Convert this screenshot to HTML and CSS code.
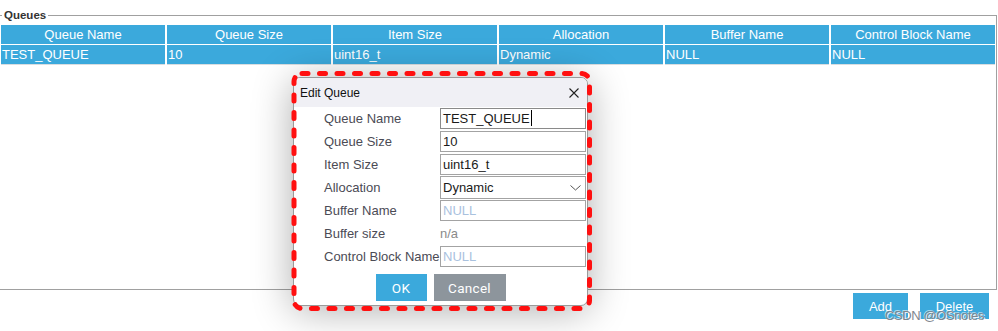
FILE: index.html
```html
<!DOCTYPE html>
<html>
<head>
<meta charset="utf-8">
<title>Queues</title>
<link rel="stylesheet" href="styles.css">
</head>
<body>
<div class="page">
  <fieldset class="queues">
    <legend class="legend">Queues</legend>
    <div class="panel">
      <div class="grid">
        <div class="th">Queue Name</div>
        <div class="th">Queue Size</div>
        <div class="th">Item Size</div>
        <div class="th">Allocation</div>
        <div class="th">Buffer Name</div>
        <div class="th">Control Block Name</div>
        <div class="td">TEST_QUEUE</div>
        <div class="td">10</div>
        <div class="td">uint16_t</div>
        <div class="td">Dynamic</div>
        <div class="td">NULL</div>
        <div class="td">NULL</div>
      </div>
    </div>
  </fieldset>
  <div class="actions">
    <button class="btn btn-add">Add</button>
    <button class="btn btn-del">Delete</button>
  </div>
</div>

<div class="dialog">
  <div class="titlebar">
    <span class="title">Edit Queue</span>
    <svg class="close" width="10" height="10" viewBox="0 0 10 10"><path d="M0.5 0.5 L9.5 9.5 M9.5 0.5 L0.5 9.5" stroke="#222" stroke-width="1.1" fill="none"/></svg>
  </div>
  <div class="form">
    <div class="label">Queue Name</div>
    <div class="field focused">TEST_QUEUE<span class="caret"></span></div>
    <div class="label">Queue Size</div>
    <div class="field">10</div>
    <div class="label">Item Size</div>
    <div class="field">uint16_t</div>
    <div class="label">Allocation</div>
    <div class="field select"><span>Dynamic</span><svg width="11" height="6" viewBox="0 0 11 6"><path d="M0.5 0.5 L5.5 5 L10.5 0.5" stroke="#555" stroke-width="1" fill="none"/></svg></div>
    <div class="label">Buffer Name</div>
    <div class="field placeholder">NULL</div>
    <div class="label">Buffer size</div>
    <div class="static">n/a</div>
    <div class="label">Control Block Name</div>
    <div class="field placeholder">NULL</div>
  </div>
  <div class="dlg-buttons">
    <button class="dbtn dbtn-ok">OK</button>
    <button class="dbtn dbtn-cancel">Cancel</button>
  </div>
</div>

<svg class="annot" width="998" height="331" viewBox="0 0 998 331">
  <rect x="294" y="73.5" width="295.5" height="235" rx="8" ry="8" fill="none" stroke="#ff1010" stroke-width="5" stroke-dasharray="6 11.5" stroke-linecap="round"/>
</svg>

<div class="watermark">CSDN @OSnotes</div>
</body>
</html>
```

FILE: styles.css
```css
html, body {
  margin: 0;
  padding: 0;
}
body {
  width: 998px;
  height: 331px;
  overflow: hidden;
  position: relative;
  background: #fff;
  font-family: "Liberation Sans", Arial, sans-serif;
}
.page {
  padding-top: 9px;
}
.queues {
  margin: 0 1px 0 0;
  padding: 4px 0 0 1px;
  border: 1px solid #a0a0a0;
  border-left: none;
  min-width: 0;
}
.legend {
  font-size: 11.5px;
  font-weight: bold;
  color: #333;
  padding: 0 2px;
  margin-left: 1px;
  line-height: 12px;
}
.panel {
  height: 264px;
}
.grid {
  display: grid;
  grid-template-columns: repeat(6, 1fr);
  column-gap: 2px;
  row-gap: 1px;
  width: 994px;
}
.th {
  background: #3ba9dc;
  color: #fff;
  height: 19px;
  line-height: 19px;
  text-align: center;
  font-size: 13px;
}
.td {
  background: #3ba9dc;
  color: #fff;
  height: 19px;
  line-height: 19px;
  font-size: 13px;
  padding-left: 1px;
  border-bottom: 1px solid #d9dde0;
}
.actions {
  display: flex;
  justify-content: flex-end;
  gap: 12px;
  padding: 3px 9px 0 0;
}
.btn {
  border: none;
  background: #3ba9dc;
  color: #fff;
  font-family: "Liberation Sans", Arial, sans-serif;
  font-size: 13px;
  height: 26px;
  padding: 0;
}
.btn-add { width: 55px; }
.btn-del { width: 69px; }

.dialog {
  position: absolute;
  left: 293px;
  top: 77px;
  width: 295px;
  height: 229px;
  box-sizing: border-box;
  border: 1px solid #9a9a9a;
  border-radius: 7px;
  background: #fff;
  box-shadow: 0 4px 40px rgba(0, 0, 0, 0.33);
  overflow: hidden;
}
.titlebar {
  height: 29px;
  background: #f0f0f5;
  display: flex;
  align-items: center;
  justify-content: space-between;
  padding: 0 8px 0 6px;
}
.title {
  font-size: 12px;
  color: #111;
}
.close {
  display: block;
}
.form {
  display: grid;
  grid-template-columns: 116px 146px;
  grid-auto-rows: 21px;
  row-gap: 2px;
  padding: 1px 0 0 30px;
}
.label {
  font-size: 13px;
  line-height: 21px;
  color: #4b4b55;
  white-space: nowrap;
}
.field {
  box-sizing: border-box;
  height: 21px;
  border: 1px solid #a3a3a3;
  font-size: 13px;
  line-height: 19px;
  padding-left: 2px;
  color: #1a1a1a;
  white-space: nowrap;
}
.field.focused {
  border-color: #8a8a8a;
}
.caret {
  display: inline-block;
  width: 1px;
  height: 16px;
  background: #000;
  vertical-align: -3px;
  margin-left: 1px;
}
.field.select {
  height: 23px;
  display: flex;
  align-items: center;
  justify-content: space-between;
  padding-right: 4px;
  margin-top: -1px;
}
.field.placeholder {
  color: #a9c1de;
}
.static {
  font-size: 13px;
  line-height: 21px;
  color: #8a8a8a;
}
.dlg-buttons {
  display: flex;
  justify-content: center;
  gap: 7px;
  padding-top: 7px;
}
.dbtn {
  border: none;
  height: 27px;
  padding: 0;
  color: #fff;
  font-family: Roboto, "Liberation Sans", sans-serif;
  font-size: 13.5px;
  letter-spacing: 0.3px;
}
.dbtn-ok {
  width: 51px;
  background: #3ba9dc;
}
.dbtn-cancel {
  width: 72px;
  background: #8d959c;
}
.annot {
  position: absolute;
  left: 0;
  top: 0;
  pointer-events: none;
}
.watermark {
  position: absolute;
  left: 885px;
  top: 308px;
  font-size: 13px;
  line-height: 15px;
  letter-spacing: -0.4px;
  color: #7f868e;
  text-shadow: 1px 1px 0 rgba(255,255,255,0.9), -1px -1px 0 rgba(255,255,255,0.6);
  white-space: nowrap;
}
```
